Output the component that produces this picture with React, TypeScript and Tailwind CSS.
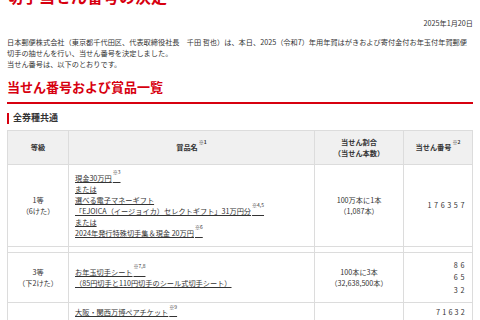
import React from "react";

const jp = { fontFamily: '"Noto Sans CJK JP", "Noto Sans", sans-serif' };

function Sup({ children }: { children: React.ReactNode }) {
  return <sup className="text-[5px] align-[4px] ml-[1px]">{children}</sup>;
}

export default function App() {
  const cell = "border border-[#dcdcdc] text-[7.2px] leading-[11px] text-[#333]";
  return (
    <div className="w-[480px] h-[320px] overflow-hidden bg-white px-[7px]" style={jp}>
      <h1 className="-mt-[14px] text-[16px] leading-[20px] font-bold text-[#d7000f]">切手当せん番号の決定</h1>
      <div className="mt-[12px] text-right text-[7.2px] leading-[11px] text-[#333]">2025年1月20日</div>
      <div className="mt-[8px] text-[7.2px] leading-[11px] text-[#333]">
        <p>日本郵便株式会社（東京都千代田区、代表取締役社長　千田 哲也）は、本日、2025（令和7）年用年賀はがきおよび寄付金付お年玉付年賀郵便</p>
        <p>切手の抽せんを行い、当せん番号を決定しました。</p>
        <p>当せん番号は、以下のとおりです。</p>
      </div>
      <h2 className="mt-[8px] pb-[6px] border-b-2 border-[#d7000f] text-[13px] leading-[18px] font-bold text-[#d7000f]">
        当せん番号および賞品一覧
      </h2>
      <div className="mt-[8px] flex items-center gap-[4px]">
        <span className="w-[2px] h-[11px] bg-[#d7000f]" />
        <span className="text-[9px] leading-[12px] font-bold text-[#333]">全券種共通</span>
      </div>
      <table className="mt-[6px] w-full table-fixed border-collapse">
        <colgroup>
          <col className="w-[61px]" />
          <col className="w-[246px]" />
          <col className="w-[89px]" />
          <col />
        </colgroup>
        <thead>
          <tr className="h-[34px] bg-[#f0f0f0] font-bold">
            <th className={`${cell} font-bold`}>等級</th>
            <th className={`${cell} font-bold`}>
              賞品名<Sup>※1</Sup>
            </th>
            <th className={`${cell} font-bold`}>
              当せん割合
              <br />
              （当せん本数）
            </th>
            <th className={`${cell} font-bold`}>
              当せん番号<Sup>※2</Sup>
            </th>
          </tr>
        </thead>
        <tbody>
          <tr className="h-[82px]">
            <td className={`${cell} text-center`}>
              1等
              <br />
              （6けた）
            </td>
            <td className={`${cell} px-[6px] underline`}>
              <div>現金30万円<Sup>※3</Sup></div>
              <div>または</div>
              <div>選べる電子マネーギフト</div>
              <div>
                「EJOICA（イージョイカ）セレクトギフト」31万円分<Sup>※4,5</Sup>
              </div>
              <div>または</div>
              <div>2024年発行特殊切手集＆現金 20万円<Sup>※6</Sup></div>
            </td>
            <td className={`${cell} text-center`}>
              100万本に1本
              <br />
              （1,087本）
            </td>
            <td className={`${cell} text-right pr-[5px] tracking-[2.6px]`}>176357</td>
          </tr>
          <tr className="h-[6px]">
            <td className={cell} />
            <td className={cell} />
            <td className={cell} />
            <td className={cell} />
          </tr>
          <tr className="h-[50px]">
            <td className={`${cell} text-center`}>
              3等
              <br />
              （下2けた）
            </td>
            <td className={`${cell} px-[6px] underline`}>
              <div>お年玉切手シート<Sup>※7,8</Sup></div>
              <div>（85円切手と110円切手のシール式切手シート）</div>
            </td>
            <td className={`${cell} text-center`}>
              100本に3本
              <br />
              （32,638,500本）
            </td>
            <td className={`${cell} text-right pr-[5px] tracking-[2.6px] leading-[12.5px]`}>
              <div>86</div>
              <div>65</div>
              <div>32</div>
            </td>
          </tr>
          <tr className="h-[40px]">
            <td className={`${cell} text-center`}>
              <div className="pt-[10px]">特別賞</div>
            </td>
            <td className={`${cell} px-[6px] align-top pt-[4px] underline`}>
              大阪・関西万博ペアチケット<Sup>※9</Sup>
            </td>
            <td className={`${cell} text-center`}>
              <div className="pt-[10px]">1万本に1本</div>
            </td>
            <td className={`${cell} text-right pr-[5px] align-top pt-[4px] tracking-[2.2px]`}>71632</td>
          </tr>
        </tbody>
      </table>
    </div>
  );
}
